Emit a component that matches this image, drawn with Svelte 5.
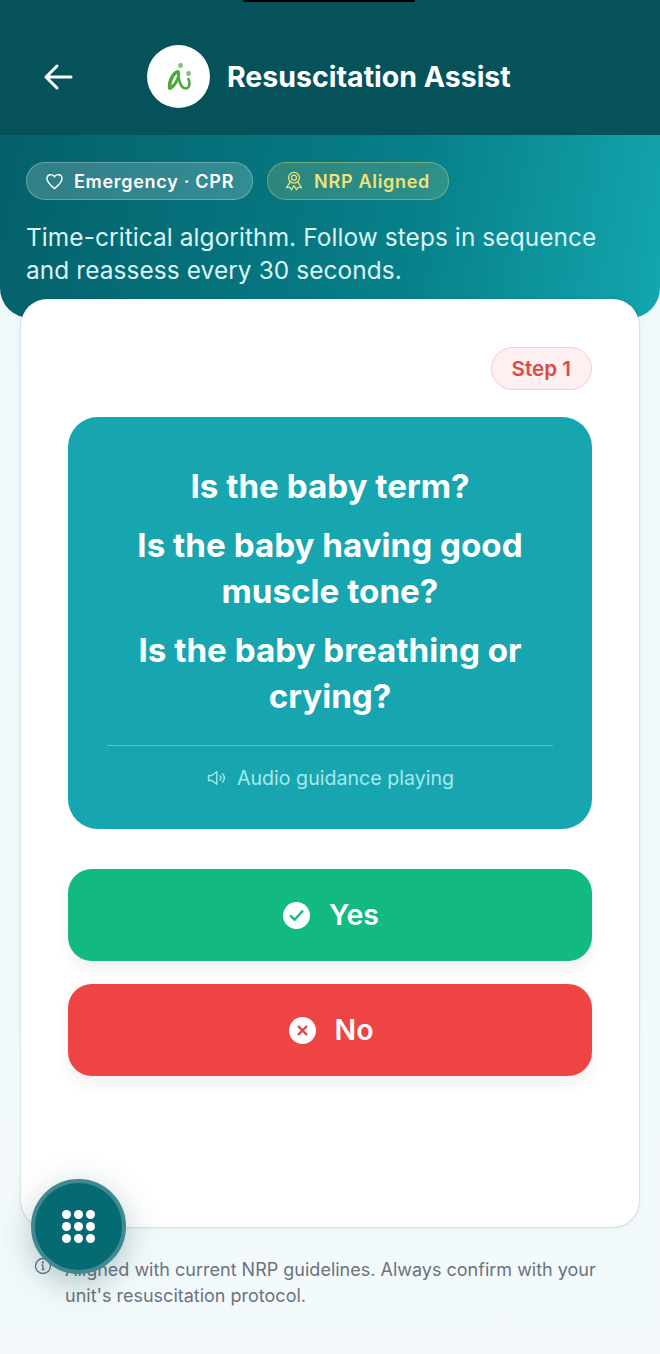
<script>
	let questions = ['Is the baby term?', 'Is the baby having good muscle tone?', 'Is the baby breathing or crying?'];
</script>

<main class="page">
	<header class="topbar">
		<div class="notch"></div>
		<button class="back" aria-label="Back">
			<svg width="32" height="32" viewBox="0 0 32 32" fill="none" stroke="#fff" stroke-width="3" stroke-linecap="round" stroke-linejoin="round">
				<path d="M29 16H4M15 5 4 16l11 11" />
			</svg>
		</button>
		<div class="logo">
			<svg width="30" height="30" viewBox="0 0 30 30" fill="none">
				<path d="M4.500 27.500C2 20 8 8.500 14 8c4-.500 2 10-2 15-2 3-6.500 6.500-7.500 4.500z" fill="#4fa63f" />
				<path d="M7.500 23.500C7.500 19 10.500 13.500 13 12c.5 3-2 8-5.500 11.500z" fill="#fff" />
				<path d="M14.500 15c1 6 3.500 11.500 7.500 11.500 4-.5 4-6 2.500-9.500" stroke="#4fa63f" stroke-width="2.600" stroke-linecap="round" />
				<circle cx="16.500" cy="3.500" r="2.400" fill="#7cc46a" />
				<circle cx="24.500" cy="11.500" r="2.400" fill="#7cc46a" />
			</svg>
		</div>
		<h1>Resuscitation Assist</h1>
	</header>

	<section class="hero">
		<div class="pills">
			<span class="pill emergency">
				<svg width="19" height="19" viewBox="0 0 24 24" fill="none" stroke="#fff" stroke-width="1.800" stroke-linejoin="round">
					<path d="M12 21C6 16 2.500 12.500 2.500 8.500A5 5 0 0 1 12 6.200a5 5 0 0 1 9.500 2.300C21.500 12.500 18 16 12 21z" />
				</svg>
				Emergency · CPR
			</span>
			<span class="pill nrp">
				<svg width="20" height="20" viewBox="0 0 24 24" fill="none" stroke="#f0e27a" stroke-width="1.500" stroke-linejoin="round" stroke-linecap="round">
					<circle cx="12" cy="8" r="6.500" />
					<circle cx="12" cy="8" r="3" />
					<path d="M7.500 13 3 20l4-.5 2 3 3-5 3 5 2-3 4 .5-4.500-7" />
				</svg>
				NRP Aligned
			</span>
		</div>
		<p>Time-critical algorithm. Follow steps in sequence and reassess every 30 seconds.</p>
	</section>

	<section class="card">
		<div class="step-row"><span class="step">Step 1</span></div>
		<div class="question">
			{#each questions as q}
				<h2>{q}</h2>
			{/each}
			<div class="audio">
				<svg width="20" height="20" viewBox="0 0 24 24" fill="none" stroke="#a5e8ec" stroke-width="1.700" stroke-linecap="round" stroke-linejoin="round">
					<path d="M3 9v6h4l6 4.500V4.500L7 9H3zM17 9.500a4 4 0 0 1 0 5M20 7a8 8 0 0 1 0 10" />
				</svg>
				<span>Audio guidance playing</span>
			</div>
		</div>
		<button class="answer yes">
			<svg width="27" height="27" viewBox="0 0 28 28">
				<circle cx="14" cy="14" r="14" fill="#fff" />
				<path d="M8 14.500l4 4 8-9" fill="none" stroke="#12b981" stroke-width="2.400" stroke-linecap="round" stroke-linejoin="round" />
			</svg>
			<span>Yes</span>
		</button>
		<button class="answer no">
			<svg width="27" height="27" viewBox="0 0 28 28">
				<circle cx="14" cy="14" r="14" fill="#fff" />
				<path d="M10 10l8 8M18 10l-8 8" fill="none" stroke="#ef4444" stroke-width="2.400" stroke-linecap="round" />
			</svg>
			<span>No</span>
		</button>
	</section>

	<footer class="note">
		<svg width="18" height="18" viewBox="0 0 18 18" fill="none" stroke="#6b7280" stroke-width="1.300">
			<circle cx="9" cy="9" r="7.500" />
			<path d="M9 8v4.500M7.500 8H9M7.500 12.500h3" />
			<circle cx="9" cy="5.500" r=".5" fill="#6b7280" />
		</svg>
		<p>Aligned with current NRP guidelines. Always confirm with your unit's resuscitation protocol.</p>
	</footer>

	<button class="fab" aria-label="Menu">
		<span class="dots">
			{#each Array(9) as _}
				<i></i>
			{/each}
		</span>
	</button>
</main>

<style>
	:global(body) {
		margin: 0;
		background: #f2f9fb;
	}

	.page {
		position: relative;
		width: 660px;
		height: 1354px;
		overflow: hidden;
		font-family: Inter, "Liberation Sans", sans-serif;
		background: linear-gradient(180deg, #eef9fb 0%, #f4fafb 100%);
	}

	button {
		border: none;
		font-family: inherit;
		cursor: pointer;
	}

	.topbar {
		position: relative;
		height: 135px;
		box-sizing: border-box;
		padding: 45px 0 27px 42px;
		display: flex;
		align-items: center;
		background: #05525a;
	}

	.notch {
		position: absolute;
		top: 0;
		left: 243px;
		width: 172px;
		height: 2px;
		background: #000;
		border-radius: 0 0 8px 8px;
	}

	.back {
		width: 32px;
		height: 32px;
		padding: 0;
		background: none;
		margin-right: 73px;
	}

	.logo {
		width: 63px;
		height: 63px;
		border-radius: 50%;
		background: #fff;
		display: flex;
		align-items: center;
		justify-content: center;
		margin-right: 17px;
	}

	h1 {
		margin: 0 0 1px;
		color: #fff;
		font-size: 28.500px;
		font-weight: 700;
	}

	.hero {
		height: 183px;
		box-sizing: border-box;
		padding: 27px 26px 0;
		border-radius: 0 0 30px 30px;
		background: linear-gradient(100deg, #04606a 0%, #07808a 62%, #14a6ae 100%);
	}

	.pills {
		display: flex;
		gap: 14px;
	}

	.pill {
		height: 38px;
		box-sizing: border-box;
		padding: 0 18px;
		display: flex;
		align-items: center;
		gap: 10px;
		border-radius: 19px;
		font-size: 18px;
		font-weight: 600;
		letter-spacing: .7px;
	}

	.emergency {
		color: #fff;
		background: rgba(255, 255, 255, .18);
		border: 1px solid rgba(255, 255, 255, .28);
	}

	.nrp {
		padding-left: 16px;
		color: #f0e27a;
		background: rgba(240, 226, 122, .16);
		border: 1px solid rgba(240, 226, 122, .36);
	}

	.hero p {
		margin: 21px 0 0;
		max-width: 590px;
		color: #dbf5f6;
		font-size: 24.400px;
		line-height: 33px;
		letter-spacing: .1px;
	}

	.card {
		position: relative;
		margin: -19px 21px 0;
		height: 928px;
		box-sizing: border-box;
		padding: 48px 47px 0;
		background: #fff;
		border-radius: 26px;
		box-shadow: 0 0 2px rgba(4, 90, 100, .4), 0 2px 10px rgba(4, 90, 100, .05);
	}

	.step-row {
		display: flex;
		justify-content: flex-end;
	}

	.step {
		height: 43px;
		box-sizing: border-box;
		padding: 0 20px;
		display: flex;
		align-items: center;
		border-radius: 22px;
		color: #e04848;
		background: #fef0f0;
		border: 1px solid #fbcaca;
		font-size: 20.600px;
		font-weight: 600;
	}

	.question {
		margin-top: 27px;
		height: 412px;
		box-sizing: border-box;
		padding: 46px 39px 0;
		border-radius: 30px;
		background: #17a6b0;
		color: #fff;
		text-align: center;
	}

	h2 {
		margin: 0 0 13px;
		font-size: 33.200px;
		line-height: 46px;
		font-weight: 700;
	}

	.audio {
		margin-top: 26px;
		padding-top: 19px;
		border-top: 1px solid rgba(255, 255, 255, .3);
		display: flex;
		align-items: center;
		justify-content: center;
		gap: 11px;
		color: #a5e8ec;
		font-size: 19.600px;
		line-height: 26px;
	}

	.answer {
		display: flex;
		align-items: center;
		justify-content: center;
		gap: 19px;
		width: 100%;
		height: 92px;
		padding: 0 0 0 2px;
		border-radius: 24px;
		color: #fff;
		font-size: 28.500px;
		font-weight: 600;
		box-shadow: 0 8px 16px rgba(0, 0, 0, .06);
	}

	.answer span {
		margin-bottom: 1px;
	}

	.yes {
		margin-top: 40px;
		background: #12b981;
	}

	.no {
		margin-top: 23px;
		background: #ef4444;
	}

	.note {
		position: relative;
		margin: 30px 40px 0 34px;
		display: flex;
		gap: 13px;
		color: #6b7280;
		font-size: 18px;
		line-height: 26px;
	}

	.note svg {
		flex: none;
	}

	.note p {
		margin: 0;
	}

	.fab {
		position: absolute;
		left: 31px;
		top: 1179px;
		width: 95px;
		height: 95px;
		box-sizing: border-box;
		padding: 0;
		border-radius: 50%;
		background: #056a72;
		border: 4px solid #3f8a90;
		display: flex;
		align-items: center;
		justify-content: center;
		box-shadow: 0 10px 34px rgba(4, 60, 70, .28);
	}

	.dots {
		display: grid;
		grid-template-columns: repeat(3, 9px);
		gap: 3px;
	}

	.dots i {
		width: 9px;
		height: 9px;
		border-radius: 50%;
		background: #fff;
	}
</style>
